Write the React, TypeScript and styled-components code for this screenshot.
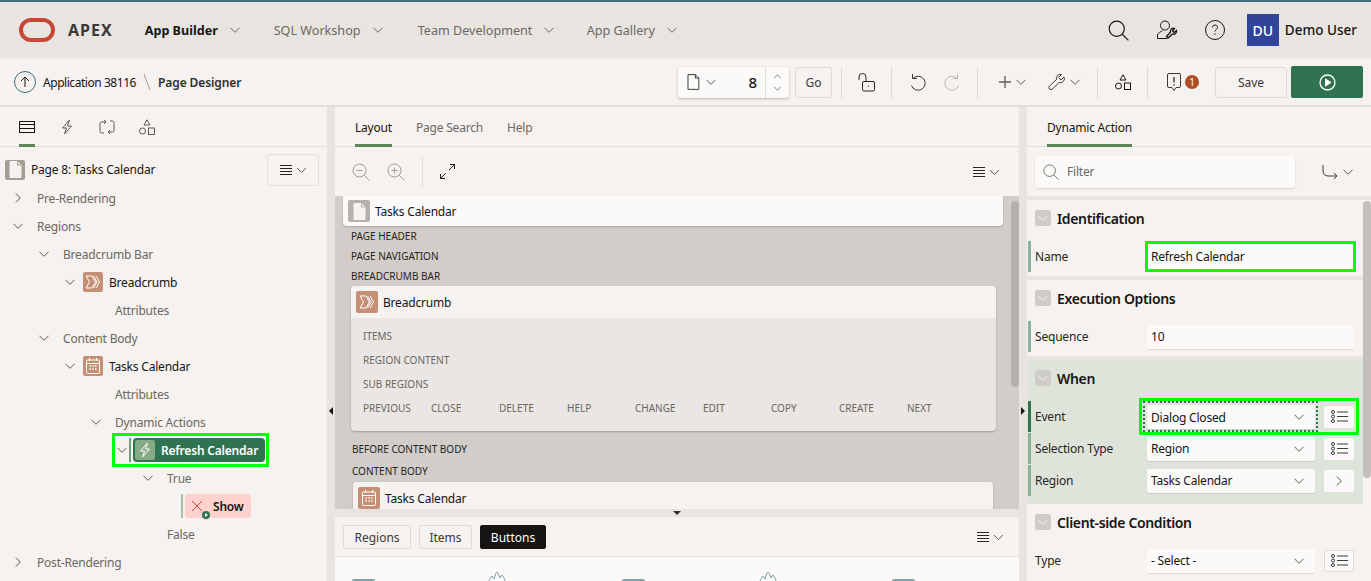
import React from "react";
import styled, { createGlobalStyle } from "styled-components";

const GlobalStyle = createGlobalStyle`
  html, body { margin: 0; padding: 0; height: 100%; background: #f5f2ef; overflow: hidden; }
  body { font-family: "Noto Sans", "Open Sans", sans-serif; font-size: 13px; letter-spacing: -0.2px; color: #161513; }
  * { box-sizing: border-box; }
`;

const Line = styled.svg.attrs({ fill: "none", stroke: "currentColor" })<{ $rot?: number; $color?: string }>`
  display: block;
  flex: none;
  color: ${(p) => p.$color || "inherit"};
  transform: rotate(${(p) => p.$rot || 0}deg);
`;

type IconProps = { size?: number; color?: string };

const Chevron = ({ right, size = 12, color = "#5f5b56" }: IconProps & { right?: boolean }) => (
  <Line width={size} height={size} viewBox="0 0 12 12" $rot={right ? -90 : 0} $color={color}>
    <path d="M1.5 3.8 6 8.3l4.500-4.500" strokeWidth="1" />
  </Line>
);

const DocIcon = ({ size = 16, color = "#161513" }: IconProps) => (
  <Line width={size * 0.8} height={size} viewBox="0 0 13 16" $color={color}>
    <path d="M1 .5h7.500L12 4v11.500H1zM8.500.5V4H12" />
  </Line>
);

const MagnifierIcon = ({ size = 18, color = "#161513", mark }: IconProps & { mark?: "plus" | "minus" }) => (
  <Line width={size} height={size} viewBox="0 0 18 18" $color={color}>
    <circle cx="7.500" cy="7.500" r="6.500" />
    <path d="m12.200 12.200 5.300 5.300" />
    {mark && <path d="M4.500 7.500h6" />}
    {mark === "plus" && <path d="M7.500 4.500v6" />}
  </Line>
);

const ShapesIcon = ({ color = "#161513" }: IconProps) => (
  <Line width={16} height={16} viewBox="0 0 16 16" $color={color}>
    <path d="M8 .8 11 6H5z" />
    <circle cx="3.500" cy="12" r="3" />
    <rect x="9.500" y="9" width="6" height="6.500" />
  </Line>
);

const BoltIcon = ({ color = "#161513", size = 16 }: IconProps) => (
  <Line width={size} height={size} viewBox="0 0 16 16" $color={color}>
    <path d="M10.500 1 3.500 9h4L5.500 15l7-8h-4z" />
  </Line>
);

const MenuIcon = () => (
  <Line width={28} height={12} viewBox="0 0 28 12" $color="#262522">
    <path d="M1 1.500h12M1 4.500h12M1 7.500h12M1 10.500h12" />
    <path d="m18 4 4.500 4.500L27 4" stroke="#5f5b56" />
  </Line>
);

const ListIcon = () => (
  <Line width={17} height={13} viewBox="0 0 17 13" $color="#3c3a36">
    <circle cx="2" cy="2" r="1.500" />
    <circle cx="2" cy="6.500" r="1.500" />
    <circle cx="2" cy="11" r="1.500" />
    <path d="M6 2h11M6 6.500h11M6 11h11" />
  </Line>
);

const Page = styled.div`
  width: 1371px;
  height: 581px;
  display: flex;
  flex-direction: column;
  overflow: hidden;
`;

/* top nav */
const Header = styled.header`
  height: 58px;
  flex: none;
  display: flex;
  align-items: center;
  background: #e8e5e1;
  border-top: 2px solid #3f717f;
  padding: 0 14px 0 19px;
  letter-spacing: 0;
`;
const Brand = styled.span`
  font-size: 16px;
  font-weight: 700;
  letter-spacing: 1px;
  color: #3c3a36;
  margin: 0 32px 0 13px;
`;
const NavItem = styled.div<{ $active?: boolean; $w: number }>`
  width: ${(p) => p.$w}px;
  flex: none;
  display: flex;
  align-items: center;
  gap: 11px;
  font-size: 12.6px;
  font-weight: ${(p) => (p.$active ? 700 : 400)};
  color: ${(p) => (p.$active ? "#161513" : "#6b6762")};
`;
const HeaderRight = styled.div`
  margin-left: auto;
  display: flex;
  align-items: center;
  gap: 27px;
`;
const UserBox = styled.div`
  display: flex;
  align-items: center;
  gap: 6px;
  font-size: 13.5px;
  font-weight: 500;
  margin-left: -5px;
`;
const Avatar = styled.div`
  width: 32px;
  height: 32px;
  background: #32449a;
  color: #fff;
  display: flex;
  align-items: center;
  justify-content: center;
  font-size: 14px;
  font-weight: 500;
`;

/* page designer toolbar */
const Toolbar = styled.div`
  height: 49px;
  flex: none;
  display: flex;
  align-items: center;
  background: #f5f2ef;
  border-top: 1px solid #efece8;
  border-bottom: 2px solid #e3e0dc;
  padding: 0 8px 0 14px;
`;
const UpCircle = styled.div`
  width: 22px;
  height: 22px;
  border-radius: 50%;
  border: 1px solid #3f717f;
  display: flex;
  align-items: center;
  justify-content: center;
`;
const Crumb = styled.span<{ $strong?: boolean }>`
  font-size: 12px;
  letter-spacing: ${(p) => (p.$strong ? -0.1 : -0.45)}px;
  font-weight: ${(p) => (p.$strong ? 600 : 400)};
  color: ${(p) => (p.$strong ? "#312f2c" : "#161513")};
  margin-left: ${(p) => (p.$strong ? 0 : 7)}px;
`;
const CrumbSlash = styled.svg`
  margin: 0 7px;
  flex: none;
`;
const ToolRight = styled.div`
  margin-left: auto;
  display: flex;
  align-items: center;
`;
const PageSelect = styled.div`
  width: 111px;
  height: 31px;
  display: flex;
  align-items: center;
  background: #fbfaf8;
  border-radius: 3px;
  box-shadow: 0 1px 3px rgba(0, 0, 0, 0.25);
  padding-left: 9px;
  gap: 5px;
`;
const PageNumber = styled.span`
  margin-left: auto;
  font-size: 15px;
  font-weight: 500;
  padding-right: 3px;
`;
const Stepper = styled.div`
  width: 24px;
  height: 100%;
  border-left: 1px solid #dedad6;
  display: flex;
  flex-direction: column;
  align-items: center;
  justify-content: center;
  gap: 3px;
`;
const Flip = styled.span`
  display: block;
  transform: scaleY(-1);
`;
const PlainButton = styled.button<{ $w: number }>`
  width: ${(p) => p.$w}px;
  height: 31px;
  font: inherit;
  font-size: 12px;
  color: #3c3a36;
  background: #f5f2ef;
  border: 1px solid #dedad6;
  border-radius: 3px;
  padding: 0;
`;
const GoButton = styled(PlainButton)`
  margin: 0 9px 0 6px;
`;
const RunButton = styled.button`
  width: 72px;
  height: 32px;
  margin-left: 4px;
  background: #2f7350;
  border: 0;
  border-radius: 2px;
  display: flex;
  align-items: center;
  justify-content: center;
`;
const ToolGroup = styled.div<{ $w: number; $gap?: number; $shift?: number }>`
  width: ${(p) => p.$w}px;
  height: 31px;
  flex: none;
  display: flex;
  align-items: center;
  justify-content: center;
  gap: ${(p) => p.$gap ?? 18}px;
  padding-left: ${(p) => p.$shift || 0}px;
  border-left: 1px solid #dedad6;
`;
const IconPair = styled.span`
  display: flex;
  align-items: center;
  gap: 4px;
`;
const Badge = styled.span`
  width: 14px;
  height: 14px;
  border-radius: 50%;
  background: #ad4e24;
  color: #fff;
  font-size: 10px;
  display: flex;
  align-items: center;
  justify-content: center;
`;

/* three columns */
const Main = styled.div`
  flex: 1;
  min-height: 0;
  display: flex;
`;
const Column = styled.section<{ $w: number }>`
  width: ${(p) => p.$w}px;
  flex: none;
  display: flex;
  flex-direction: column;
  background: #f5f2ef;
  min-height: 0;
  overflow: hidden;
`;
const Splitter = styled.div`
  width: 8px;
  flex: none;
  background: #e8e5e1;
  display: flex;
  justify-content: center;
  padding-top: 300px;
`;
const Arrow = styled.span<{ $dir: "left" | "right" | "down" }>`
  width: 0;
  height: 0;
  border-style: solid;
  border-color: transparent;
  ${(p) =>
    p.$dir === "left"
      ? "border-width: 4px 4px 4px 0; border-right-color: #161513;"
      : p.$dir === "right"
      ? "border-width: 4px 0 4px 4px; border-left-color: #161513;"
      : "border-width: 4px 4px 0 4px; border-top-color: #312f2c;"}
`;
const TabBar = styled.div<{ $gap?: number; $left?: number }>`
  height: 40px;
  flex: none;
  display: flex;
  align-items: stretch;
  padding-left: ${(p) => p.$left || 20}px;
  gap: ${(p) => p.$gap || 24}px;
  border-bottom: 1px solid #e3e0dc;
`;
const Tab = styled.div<{ $active?: boolean }>`
  display: flex;
  align-items: center;
  padding-top: 3px;
  font-size: 12px;
  color: ${(p) => (p.$active ? "#161513" : "#6b6762")};
  border-bottom: 3px solid ${(p) => (p.$active ? "#5d8558" : "transparent")};
  margin-bottom: -1px;
`;

/* tree */
const Tree = styled.div`
  display: flex;
  flex-direction: column;
`;
const TreeHead = styled.div`
  height: 37px;
  margin-top: 4px;
  margin-bottom: -4px;
  flex: none;
  display: flex;
  align-items: center;
  padding: 0 8px 0 5px;
  font-size: 12px;
`;
const MenuBox = styled.div`
  margin-left: auto;
  width: 52px;
  height: 32px;
  border: 1px solid #e3e0dc;
  border-radius: 3px;
  display: flex;
  align-items: center;
  justify-content: center;
`;
const TreeRow = styled.div<{ $level: number }>`
  height: 28px;
  flex: none;
  display: flex;
  align-items: center;
  padding-left: ${(p) => 12 + p.$level * 26}px;
`;
const ChevronSlot = styled.span`
  width: 12px;
  margin-right: 7px;
  flex: none;
`;
const TreeText = styled.span<{ $plain?: boolean }>`
  font-size: 12px;
  margin-left: ${(p) => (p.$plain ? 6 : 0)}px;
  color: ${(p) => (p.$plain ? "#6b6762" : "#161513")};
`;
const Tile = styled.span<{ $bg: string; $size?: number }>`
  width: ${(p) => p.$size || 20}px;
  height: ${(p) => p.$size || 20}px;
  flex: none;
  border-radius: 2px;
  background: ${(p) => p.$bg};
  display: flex;
  align-items: center;
  justify-content: center;
  margin-right: 6px;
`;
const Highlight = styled.div`
  height: 28px;
  width: 151px;
  margin-left: -1px;
  padding-left: 1px;
  display: flex;
  align-items: center;
  outline: 3px solid #00ff00;
`;
const ActionNode = styled.div<{ $bar: string; $bg: string; $fg: string; $w: number; $h: number }>`
  margin-left: -6px;
  display: flex;
  align-items: center;
  height: ${(p) => p.$h}px;
  border-left: 2px solid ${(p) => p.$bar};
  padding-left: 2px;
  & > div {
    width: ${(p) => p.$w}px;
    height: 100%;
    display: flex;
    align-items: center;
    padding-left: 2px;
    border-radius: 4px;
    background: ${(p) => p.$bg};
    color: ${(p) => p.$fg};
    font-size: 12px;
    font-weight: 600;
  }
`;
const ShowMark = styled.span`
  position: relative;
  width: 20px;
  height: 20px;
  margin-right: 6px;
  flex: none;
  display: flex;
  align-items: center;
  justify-content: center;
`;
const PlayDot = styled.span`
  position: absolute;
  right: -3px;
  bottom: -3px;
  width: 8px;
  height: 8px;
  border-radius: 50%;
  background: #2f7350;
  box-shadow: 0 0 0 1px #fdd2ce;
  display: flex;
  align-items: center;
  justify-content: center;
  &::after {
    content: "";
    margin-left: 1px;
    border-style: solid;
    border-width: 2px 0 2px 3px;
    border-color: transparent transparent transparent #fff;
  }
`;

/* center */
const CenterBar = styled.div`
  height: 49px;
  flex: none;
  display: flex;
  align-items: center;
  padding: 0 19px 0 17px;
  gap: 17px;
`;
const VRule = styled.span`
  width: 1px;
  height: 32px;
  background: #e3e0dc;
  flex: none;
`;
const CanvasWrap = styled.div`
  height: 313px;
  flex: none;
  display: flex;
  background: #d2cdc8;
  overflow: hidden;
`;
const Canvas = styled.div`
  flex: 1;
  padding: 0 8px;
  min-width: 0;
  letter-spacing: 0;
`;
const ScrollTrack = styled.div<{ $w: number; $bg: string }>`
  width: ${(p) => p.$w}px;
  flex: none;
  background: ${(p) => p.$bg};
`;
const ScrollThumb = styled.div<{ $h: number; $bg: string; $top: number }>`
  height: ${(p) => p.$h}px;
  margin-top: ${(p) => p.$top}px;
  background: ${(p) => p.$bg};
  border-radius: 4px;
`;
const PageBar = styled.div`
  height: 30px;
  background: #fbfaf8;
  border-radius: 0 0 4px 4px;
  box-shadow: 0 1px 2px rgba(0, 0, 0, 0.2);
  display: flex;
  align-items: center;
  padding-left: 5px;
  font-size: 12px;
  letter-spacing: -0.2px;
  & > span:first-child {
    margin-right: 5px;
  }
`;
const SlotLabel = styled.div<{ $top?: number; $left?: number }>`
  height: 20px;
  margin: ${(p) => p.$top || 0}px 0 0 ${(p) => p.$left || 8}px;
  display: flex;
  align-items: center;
  font-size: 10px;
  color: #262522;
`;
const RegionCard = styled.div<{ $inset: number; $right: number; $h?: number; $top?: number }>`
  margin: ${(p) => p.$top || 0}px ${(p) => p.$right}px 0 ${(p) => p.$inset}px;
  height: ${(p) => (p.$h ? `${p.$h}px` : "auto")};
  border-radius: 4px;
  background: #e9e6e3;
  box-shadow: 0 1px 2px rgba(0, 0, 0, 0.25);
  overflow: hidden;
`;
const RegionTitle = styled.div`
  height: 32px;
  background: #f5f2ef;
  display: flex;
  align-items: center;
  padding-left: 5px;
  font-size: 12px;
  letter-spacing: -0.2px;
  & > span:first-child {
    width: 22px;
    height: 22px;
    margin-right: 5px;
  }
`;
const RegionBody = styled.div`
  padding: 6px 12px 11px;
`;
const SubSlot = styled.div`
  height: 24px;
  display: flex;
  align-items: center;
  font-size: 10px;
  color: #6b6762;
`;
const ButtonSlots = styled.div`
  height: 24px;
  display: grid;
  grid-template-columns: repeat(9, 68px);
  align-items: center;
  font-size: 10px;
  color: #6b6762;
`;
const HSplit = styled.div`
  height: 8px;
  flex: none;
  background: #e8e5e1;
  display: flex;
  align-items: center;
  justify-content: center;
`;
const GalleryBar = styled.div`
  height: 40px;
  flex: none;
  display: flex;
  align-items: center;
  padding: 1px 15px 0 8px;
  gap: 8px;
  border-bottom: 1px solid #e3e0dc;
`;
const GalleryTab = styled.button<{ $w: number; $active?: boolean }>`
  width: ${(p) => p.$w}px;
  height: 24px;
  padding: 0;
  font: inherit;
  font-size: 12px;
  border-radius: 2px;
  border: 1px solid ${(p) => (p.$active ? "#161513" : "#dedad6")};
  background: ${(p) => (p.$active ? "#161513" : "#f5f2ef")};
  color: ${(p) => (p.$active ? "#fff" : "#3c3a36")};
`;
const PushRight = styled.span`
  margin-left: auto;
`;
const Gallery = styled.div`
  flex: 1;
  background: #fbfaf8;
  display: flex;
  padding-left: 17px;
  overflow: hidden;
`;
const GalleryCell = styled.div<{ $w: number }>`
  width: ${(p) => p.$w}px;
  flex: none;
  padding-top: 15px;
`;
const GalleryBtn = styled.div`
  width: 23px;
  height: 8px;
  margin-top: 7px;
  border-radius: 2px;
  background: #7fa3ad;
`;

/* property editor */
const FilterRow = styled.div`
  height: 49px;
  flex: none;
  display: flex;
  align-items: center;
  padding: 0 17px 0 8px;
`;
const FilterBox = styled.div`
  width: 260px;
  height: 32px;
  background: #fbfaf8;
  border-radius: 3px;
  box-shadow: 0 1px 2px rgba(0, 0, 0, 0.12);
  display: flex;
  align-items: center;
  gap: 8px;
  padding-left: 8px;
  font-size: 12px;
  color: #6b6762;
`;
const PropsWrap = styled.div`
  flex: 1;
  min-height: 0;
  display: flex;
  background: #e8e5e1;
  border-top: 4px solid #e8e5e1;
`;
const PropsList = styled.div`
  flex: 1;
  min-width: 0;
  display: flex;
  flex-direction: column;
  overflow: hidden;
`;
const Group = styled.div<{ $on?: boolean; $h: number; $gap?: number }>`
  height: ${(p) => p.$h}px;
  flex: none;
  margin-bottom: ${(p) => p.$gap ?? 4}px;
  background: ${(p) => (p.$on ? "#dfe4da" : "#f5f2ef")};
  padding-left: 1px;
`;
const GroupHead = styled.div`
  height: 36px;
  margin-bottom: 5px;
  display: flex;
  align-items: center;
  gap: 6px;
  padding-left: 7px;
  font-size: 14px;
  letter-spacing: -0.35px;
  font-weight: 600;
`;
const Toggle = styled.span`
  width: 16px;
  height: 16px;
  background: #cfcbc6;
  border-radius: 2px;
  display: flex;
  align-items: center;
  justify-content: center;
`;
const PropRow = styled.div<{ $bar?: string }>`
  height: 31px;
  margin-bottom: 1px;
  display: flex;
  align-items: center;
  border-left: 3px solid ${(p) => p.$bar || "transparent"};
  padding-left: 4px;
  font-size: 12px;
`;
const PropLabel = styled.label`
  width: 112px;
  flex: none;
  color: #262522;
`;
const Field = styled.div<{ $w?: number }>`
  width: ${(p) => p.$w || 207}px;
  height: 24px;
  flex: none;
  display: flex;
  align-items: center;
  justify-content: space-between;
  padding: 0 10px 0 4px;
  background: #fbfaf8;
  border-radius: 2px;
  box-shadow: 0 1px 1px rgba(0, 0, 0, 0.1);
  color: #161513;
`;
const NameField = styled(Field)`
  width: 211px;
  height: 31px;
  margin-left: -2px;
  padding-left: 3px;
  border: 3px solid #00ff00;
  border-radius: 0;
  box-shadow: none;
`;
const EventBox = styled.div`
  width: 220px;
  height: 37px;
  margin-left: -8px;
  flex: none;
  display: flex;
  align-items: center;
  outline: 3px solid #00ff00;
  outline-offset: -3px;
  padding-left: 4px;
`;
const Dotted = styled.div`
  width: 175px;
  height: 31px;
  border: 2px dotted #2f7350;
  padding: 2px;
  flex: none;
  & > div {
    width: 168px;
  }
`;
const SideBtn = styled.span<{ $border?: boolean; $tight?: boolean }>`
  width: 30px;
  height: 22px;
  flex: none;
  margin-left: ${(p) => (p.$tight ? 6 : 9)}px;
  background: #fbfaf8;
  border: ${(p) => (p.$border ? "1px solid #dedad6" : "0")};
  border-radius: 2px;
  display: flex;
  align-items: center;
  justify-content: center;
`;
const SelectWrap = styled.div`
  display: flex;
  align-items: center;
`;

const Select = ({ value }: { value: string }) => (
  <Field $w={168}>
    {value}
    <Chevron />
  </Field>
);

const TreeNode = ({
  level,
  open,
  closed,
  children,
}: {
  level: number;
  open?: boolean;
  closed?: boolean;
  children: React.ReactNode;
}) => (
  <TreeRow $level={level}>
    <ChevronSlot>{open && <Chevron />}{closed && <Chevron right />}</ChevronSlot>
    {children}
  </TreeRow>
);

const BreadcrumbTile = () => (
  <Tile $bg="#c58f73">
    <Line width={16} height={14} viewBox="0 0 16 14" $color="#fff">
      <path d="M1 1h6l3.500 6L7 13H1l3.500-6zM8.500 1l3.500 6-3.500 6M11 1l3.500 6-3.500 6" />
    </Line>
  </Tile>
);

const CalendarTile = () => (
  <Tile $bg="#c58f73">
    <Line width={14} height={16} viewBox="0 0 14 16" $color="#fff">
      <rect x=".5" y="2" width="13" height="13.500" rx="1" />
      <path d="M.5 5.500h13M3.500 0v3M10.500 0v3" />
      <path d="M3.500 8h1.500M6.300 8h1.500M9 8h1.500M3.500 11h1.500M6.300 11h1.500M9 11h1.500" strokeWidth="1.600" />
    </Line>
  </Tile>
);

const PageTile = ({ size, bg = "#a39d93" }: { size?: number; bg?: string }) => (
  <Tile $bg={bg} $size={size}>
    <Line width={13} height={17} viewBox="0 0 13 17">
      <path d="M1 .5h7.500L12 4v12.500H1z" fill="#f5f2ef" stroke="#f5f2ef" />
      <path d="M8.500 .5V4H12" stroke={bg} />
    </Line>
  </Tile>
);

const Flame = () => (
  <Line width={20} height={16} viewBox="0 0 20 16" $color="#7fa3ad">
    <path d="M1 9C2 7 3 5 4 4l2 3 2-6 1-1 1 1 2 5 2-3 2 3 3 8" />
  </Line>
);

const App = () => (
  <Page>
    <GlobalStyle />
    <Header>
      <svg width="36" height="24" viewBox="0 0 36 24">
        <rect x="2" y="2" width="32" height="20" rx="10" fill="none" stroke="#c74634" strokeWidth="4" />
      </svg>
      <Brand>APEX</Brand>
      <NavItem $active $w={129}>App Builder<Chevron color="#6b6762" /></NavItem>
      <NavItem $w={144}>SQL Workshop<Chevron color="#6b6762" /></NavItem>
      <NavItem $w={169}>Team Development<Chevron color="#6b6762" /></NavItem>
      <NavItem $w={143}>App Gallery<Chevron color="#6b6762" /></NavItem>
      <HeaderRight>
        <MagnifierIcon size={21} />
        <Line width={22} height={22} viewBox="0 0 22 22" $color="#161513">
          <circle cx="9" cy="6.500" r="4.500" />
          <path d="M6.500 11.500C5 13 2 13.500 1.500 16v3.500H11" />
          <path d="M20.500 11.500l-2.500 2-1.500-1.500 2-2.500a3 3 0 0 0-4 3.500l-4 4.500 1.500 1.500 4.500-4a3 3 0 0 0 4-3.500z" strokeWidth="1.300" />
        </Line>
        <Line width={20} height={20} viewBox="0 0 20 20" $color="#161513">
          <circle cx="10" cy="10" r="9.500" />
          <path d="M7.500 7.500C7.500 6 8.500 5 10 5s2.500 1 2.500 2.400c0 2-2.500 2-2.500 4.100M10 13.500v1.500" />
        </Line>
        <UserBox>
          <Avatar>DU</Avatar>
          Demo User
        </UserBox>
      </HeaderRight>
    </Header>

    <Toolbar>
      <UpCircle>
        <Line width={12} height={12} viewBox="0 0 12 12" $color="#161513">
          <path d="M6 11V1M2 5l4-4 4 4" />
        </Line>
      </UpCircle>
      <Crumb>Application 38116</Crumb>
      <CrumbSlash width="8" height="16" viewBox="0 0 8 16">
        <path d="M1 0l6 16" stroke="#a39d93" fill="none" />
      </CrumbSlash>
      <Crumb $strong>Page Designer</Crumb>
      <ToolRight>
        <PageSelect>
          <DocIcon size={16} color="#3c3a36" />
          <Chevron />
          <PageNumber>8</PageNumber>
          <Stepper>
            <Flip><Chevron size={9} /></Flip>
            <Chevron size={9} />
          </Stepper>
        </PageSelect>
        <GoButton $w={37}>Go</GoButton>
        <ToolGroup $w={50}>
          <Line width={17} height={19} viewBox="0 0 17 19" $color="#262522">
            <path d="M1 7V4a3.500 3.500 0 0 1 7 0v4" />
            <rect x="4.500" y="8.500" width="12" height="9.500" rx="1.500" />
            <path d="M10.500 12.800v1" />
          </Line>
        </ToolGroup>
        <ToolGroup $w={86}>
          <Line width={17} height={18} viewBox="0 0 17 18" $color="#3c3a36">
            <path d="M4 5.500A7 7 0 1 1 2.500 12.500M3.500 1v4.500H8" />
          </Line>
          <Line width={17} height={18} viewBox="0 0 17 18" $color="#b9b5af">
            <path d="M13 5.500A7 7 0 1 0 14.500 12.500M13.500 1v4.500H9" />
          </Line>
        </ToolGroup>
        <ToolGroup $w={120} $gap={21} $shift={4}>
          <IconPair>
            <Line width={12} height={12} viewBox="0 0 12 12" $color="#5f5b56">
              <path d="M6 0v12M0 6h12" strokeWidth="1.300" />
            </Line>
            <Chevron />
          </IconPair>
          <IconPair>
            <Line width={17} height={18} viewBox="0 0 17 18" $color="#3c3a36">
              <path d="M16 4l-3 3-2.500-2.500 3-3a4 4 0 0 0-5 5L1.500 13a2 2 0 0 0 3 3l6.500-6.500a4 4 0 0 0 5-5.500z" />
            </Line>
            <Chevron />
          </IconPair>
        </ToolGroup>
        <ToolGroup $w={50}><ShapesIcon /></ToolGroup>
        <ToolGroup $w={68} $gap={4} $shift={3}>
          <Line width={14} height={19} viewBox="0 0 14 19" $color="#3c3a36">
            <path d="M2 .5h10a1.500 1.500 0 0 1 1.500 1.500v11a1.500 1.500 0 0 1-1.500 1.500H9l-2 3-2-3H2A1.500 1.500 0 0 1 .5 13V2A1.500 1.500 0 0 1 2 .5z" />
            <path d="M7 4v5.500M7 11v1.500" strokeWidth="1.400" />
          </Line>
          <Badge>1</Badge>
        </ToolGroup>
        <PlainButton $w={72}>Save</PlainButton>
        <RunButton aria-label="Run">
          <Line width={17} height={17} viewBox="0 0 17 17" $color="#fff">
            <circle cx="8.500" cy="8.500" r="7.500" strokeWidth="1.300" />
            <path d="M6.500 5v7l5.500-3.500z" fill="#fff" />
          </Line>
        </RunButton>
      </ToolRight>
    </Toolbar>

    <Main>
      <Column $w={327}>
        <TabBar $left={19} $gap={24}>
          <Tab $active>
            <Line width={16} height={12} viewBox="0 0 16 12" $color="#161513">
              <rect x=".5" y=".5" width="15" height="11" />
              <path d="M.5 3.500h15M.5 7.500h15" />
            </Line>
          </Tab>
          <Tab><BoltIcon color="#5f5b56" /></Tab>
          <Tab>
            <Line width={16} height={16} viewBox="0 0 16 16" $color="#5f5b56">
              <path d="M6 3H2.500A1.500 1.500 0 0 0 1 4.500v8A1.500 1.500 0 0 0 2.500 14H5M10 13h3.500a1.500 1.500 0 0 0 1.500-1.500v-8A1.500 1.500 0 0 0 13.500 2H11M5 1l2 2-2 2M11 11l-2 2 2 2" />
            </Line>
          </Tab>
          <Tab><ShapesIcon color="#5f5b56" /></Tab>
        </TabBar>
        <Tree>
          <TreeHead>
            <PageTile />
            Page 8: Tasks Calendar
            <MenuBox><MenuIcon /></MenuBox>
          </TreeHead>
          <TreeNode level={0} closed><TreeText $plain>Pre-Rendering</TreeText></TreeNode>
          <TreeNode level={0} open><TreeText $plain>Regions</TreeText></TreeNode>
          <TreeNode level={1} open><TreeText $plain>Breadcrumb Bar</TreeText></TreeNode>
          <TreeNode level={2} open><BreadcrumbTile /><TreeText>Breadcrumb</TreeText></TreeNode>
          <TreeNode level={3}><TreeText $plain>Attributes</TreeText></TreeNode>
          <TreeNode level={1} open><TreeText $plain>Content Body</TreeText></TreeNode>
          <TreeNode level={2} open><CalendarTile /><TreeText>Tasks Calendar</TreeText></TreeNode>
          <TreeNode level={3}><TreeText $plain>Attributes</TreeText></TreeNode>
          <TreeNode level={3} open><TreeText $plain>Dynamic Actions</TreeText></TreeNode>
          <TreeRow $level={4}>
            <Highlight>
              <ChevronSlot><Chevron /></ChevronSlot>
              <ActionNode $bar="#6f9e7d" $bg="#2f7350" $fg="#fff" $w={132} $h={24}>
                <div>
                  <Tile $bg="#86ab84">
                    <BoltIcon color="#fff" />
                  </Tile>
                  Refresh Calendar
                </div>
              </ActionNode>
            </Highlight>
          </TreeRow>
          <TreeNode level={5} open><TreeText $plain>True</TreeText></TreeNode>
          <TreeNode level={6}>
            <ActionNode $bar="#a4bfa5" $bg="#fdd2ce" $fg="#161513" $w={66} $h={24}>
              <div>
                <ShowMark>
                  <Line width={12} height={12} viewBox="0 0 12 12" $color="#c74634">
                    <path d="M1 1l10 10M11 1 1 11" />
                  </Line>
                  <PlayDot />
                </ShowMark>
                Show
              </div>
            </ActionNode>
          </TreeNode>
          <TreeNode level={5}><TreeText $plain>False</TreeText></TreeNode>
          <TreeNode level={0} closed><TreeText $plain>Post-Rendering</TreeText></TreeNode>
        </Tree>
      </Column>
      <Splitter><Arrow $dir="left" /></Splitter>

      <Column $w={684}>
        <TabBar>
          <Tab $active>Layout</Tab>
          <Tab>Page Search</Tab>
          <Tab>Help</Tab>
        </TabBar>
        <CenterBar>
          <MagnifierIcon color="#a39d93" mark="minus" />
          <MagnifierIcon color="#a39d93" mark="plus" />
          <VRule />
          <Line width={15} height={15} viewBox="0 0 15 15" $color="#262522">
            <path d="M9 6l5.500-5.500M10 .5h4.500V5M6 9 .5 14.500M5 14.500H.5V10" />
          </Line>
          <PushRight><MenuIcon /></PushRight>
        </CenterBar>
        <CanvasWrap>
          <Canvas>
            <PageBar>
              <PageTile size={22} bg="#b5b2ad" />
              Tasks Calendar
            </PageBar>
            <SlotLabel>PAGE HEADER</SlotLabel>
            <SlotLabel>PAGE NAVIGATION</SlotLabel>
            <SlotLabel>BREADCRUMB BAR</SlotLabel>
            <RegionCard $inset={8} $right={7}>
              <RegionTitle>
                <BreadcrumbTile />
                Breadcrumb
              </RegionTitle>
              <RegionBody>
                <SubSlot>ITEMS</SubSlot>
                <SubSlot>REGION CONTENT</SubSlot>
                <SubSlot>SUB REGIONS</SubSlot>
                <ButtonSlots>
                  {["PREVIOUS", "CLOSE", "DELETE", "HELP", "CHANGE", "EDIT", "COPY", "CREATE", "NEXT"].map((b) => (
                    <span key={b}>{b}</span>
                  ))}
                </ButtonSlots>
              </RegionBody>
            </RegionCard>
            <SlotLabel $top={8} $left={9}>BEFORE CONTENT BODY</SlotLabel>
            <SlotLabel $top={2} $left={9}>CONTENT BODY</SlotLabel>
            <RegionCard $inset={10} $right={10} $top={1} $h={40}>
              <RegionTitle>
                <CalendarTile />
                Tasks Calendar
              </RegionTitle>
            </RegionCard>
          </Canvas>
          <ScrollTrack $w={8} $bg="#d2cdc8">
            <ScrollThumb $top={5} $h={186} $bg="#b5b0aa" />
          </ScrollTrack>
        </CanvasWrap>
        <HSplit><Arrow $dir="down" /></HSplit>
        <GalleryBar>
          <GalleryTab $w={68}>Regions</GalleryTab>
          <GalleryTab $w={53}>Items</GalleryTab>
          <GalleryTab $w={66} $active>Buttons</GalleryTab>
          <PushRight><MenuIcon /></PushRight>
        </GalleryBar>
        <Gallery>
          <GalleryCell $w={136}><GalleryBtn /></GalleryCell>
          <GalleryCell $w={134}><Flame /></GalleryCell>
          <GalleryCell $w={137}><GalleryBtn /></GalleryCell>
          <GalleryCell $w={133}><Flame /></GalleryCell>
          <GalleryCell $w={30}><GalleryBtn /></GalleryCell>
        </Gallery>
      </Column>
      <Splitter><Arrow $dir="right" /></Splitter>

      <Column $w={344}>
        <TabBar>
          <Tab $active>Dynamic Action</Tab>
        </TabBar>
        <FilterRow>
          <FilterBox>
            <MagnifierIcon size={16} color="#6b6762" />
            Filter
          </FilterBox>
          <PushRight>
            <IconPair>
              <Line width={16} height={14} viewBox="0 0 16 14" $color="#3c3a36">
                <path d="M1 0v6a5 5 0 0 0 5 5h9M12 8l3 3-3 3" />
              </Line>
              <Chevron />
            </IconPair>
          </PushRight>
        </FilterRow>
        <PropsWrap>
          <PropsList>
            <Group $h={76}>
              <GroupHead><Toggle><Chevron color="#f5f2ef" /></Toggle>Identification</GroupHead>
              <PropRow $bar="#8cb09a">
                <PropLabel>Name</PropLabel>
                <NameField>Refresh Calendar</NameField>
              </PropRow>
            </Group>
            <Group $h={76}>
              <GroupHead><Toggle><Chevron color="#f5f2ef" /></Toggle>Execution Options</GroupHead>
              <PropRow $bar="#8cb09a">
                <PropLabel>Sequence</PropLabel>
                <Field>10</Field>
              </PropRow>
            </Group>
            <Group $h={144} $on $gap={0}>
              <GroupHead><Toggle><Chevron color="#f5f2ef" /></Toggle>When</GroupHead>
              <PropRow $bar="#2f7350">
                <PropLabel>Event</PropLabel>
                <EventBox>
                  <Dotted><Select value="Dialog Closed" /></Dotted>
                  <SideBtn $tight><ListIcon /></SideBtn>
                </EventBox>
              </PropRow>
              <PropRow $bar="#8cb09a">
                <PropLabel>Selection Type</PropLabel>
                <SelectWrap><Select value="Region" /><SideBtn><ListIcon /></SideBtn></SelectWrap>
              </PropRow>
              <PropRow $bar="#8cb09a">
                <PropLabel>Region</PropLabel>
                <SelectWrap>
                  <Select value="Tasks Calendar" />
                  <SideBtn><Chevron right /></SideBtn>
                </SelectWrap>
              </PropRow>
            </Group>
            <Group $h={90}>
              <GroupHead><Toggle><Chevron color="#f5f2ef" /></Toggle>Client-side Condition</GroupHead>
              <PropRow>
                <PropLabel>Type</PropLabel>
                <SelectWrap>
                  <Select value="- Select -" />
                  <SideBtn $border><ListIcon /></SideBtn>
                </SelectWrap>
              </PropRow>
            </Group>
          </PropsList>
          <ScrollTrack $w={8} $bg="#f5f2ef">
            <ScrollThumb $top={1} $h={277} $bg="#c4bfba" />
          </ScrollTrack>
        </PropsWrap>
      </Column>
    </Main>
  </Page>
);

export default App;
